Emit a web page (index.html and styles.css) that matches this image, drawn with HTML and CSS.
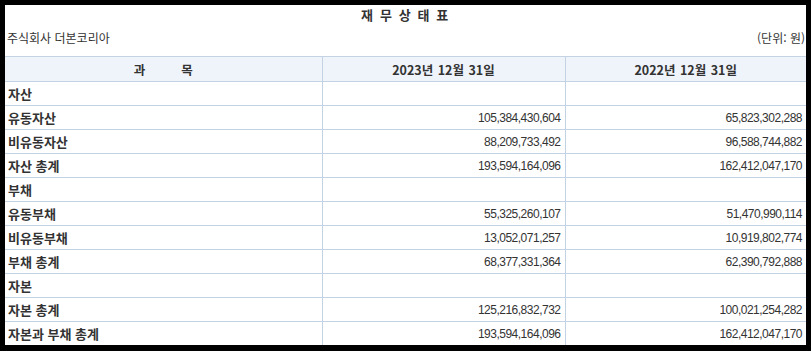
FILE: index.html
```html
<!DOCTYPE html>
<html lang="ko">
<head>
<meta charset="utf-8">
<link rel="stylesheet" href="styles.css">
</head>
<body>
<div class="sheet">
  <div class="title">재 무 상 태 표</div>
  <div class="meta">
    <span>주식회사 더본코리아</span>
    <span>(단위: 원)</span>
  </div>
  <table class="fs">
    <colgroup>
      <col class="c1"><col class="c2"><col class="c3">
    </colgroup>
    <thead>
      <tr><th class="subj">과&nbsp;&nbsp;&nbsp;&nbsp;&nbsp;&nbsp;&nbsp;&nbsp;목</th><th>2023년 12월 31일</th><th>2022년 12월 31일</th></tr>
    </thead>
    <tbody>
      <tr><td class="lbl">자산</td><td></td><td></td></tr>
      <tr><td class="lbl">유동자산</td><td class="num">105,384,430,604</td><td class="num">65,823,302,288</td></tr>
      <tr><td class="lbl">비유동자산</td><td class="num">88,209,733,492</td><td class="num">96,588,744,882</td></tr>
      <tr><td class="lbl">자산 총계</td><td class="num">193,594,164,096</td><td class="num">162,412,047,170</td></tr>
      <tr><td class="lbl">부채</td><td></td><td></td></tr>
      <tr><td class="lbl">유동부채</td><td class="num">55,325,260,107</td><td class="num">51,470,990,114</td></tr>
      <tr><td class="lbl">비유동부채</td><td class="num">13,052,071,257</td><td class="num">10,919,802,774</td></tr>
      <tr><td class="lbl">부채 총계</td><td class="num">68,377,331,364</td><td class="num">62,390,792,888</td></tr>
      <tr><td class="lbl">자본</td><td></td><td></td></tr>
      <tr><td class="lbl">자본 총계</td><td class="num">125,216,832,732</td><td class="num">100,021,254,282</td></tr>
      <tr><td class="lbl">자본과 부채 총계</td><td class="num">193,594,164,096</td><td class="num">162,412,047,170</td></tr>
    </tbody>
  </table>
</div>
</body>
</html>
```
FILE: styles.css
```css
html, body {
  margin: 0;
  padding: 0;
  background: #000;
}
body {
  padding: 5px 5px 6px 5px;
  width: 801px;
}
.sheet {
  background: #fff;
  width: 801px;
  height: 340px;
  overflow: hidden;
  font-family: "Noto Sans CJK KR", "Liberation Sans", sans-serif;
  color: #333;
}
.title {
  height: 20px;
  line-height: 20px;
  text-align: center;
  font-size: 13px;
  font-weight: bold;
  letter-spacing: 1.6px;
  color: #333;
}
.meta {
  display: flex;
  justify-content: space-between;
  height: 31px;
  line-height: 25px;
  font-size: 12px;
  padding: 0 1px 0 2px;
  color: #333;
}
.fs {
  border-collapse: collapse;
  width: 801px;
  table-layout: fixed;
}
.c1 { width: 317px; }
.c2 { width: 243px; }
.c3 { width: 241px; }
.fs th, .fs td {
  border: 1px solid #c3d3e3;
  padding: 0;
}
.fs tr > :first-child { border-left: none; }
.fs tr > :last-child { border-right: none; }
.fs tbody tr:last-child td { border-bottom: none; }
.fs th {
  background: #eff4fb;
  height: 24px;
  font-size: 12.5px;
  font-weight: bold;
  color: #333;
  text-align: center;
  word-spacing: 1px;
}
.fs td {
  height: 23px;
}
.lbl {
  font-size: 13px;
  font-weight: bold;
  padding-left: 3px !important;
  color: #333;
}
.num {
  text-align: right;
  font-family: "Liberation Sans", sans-serif;
  font-size: 12px;
  letter-spacing: -0.5px;
  padding-right: 4px !important;
  color: #333;
}
```
